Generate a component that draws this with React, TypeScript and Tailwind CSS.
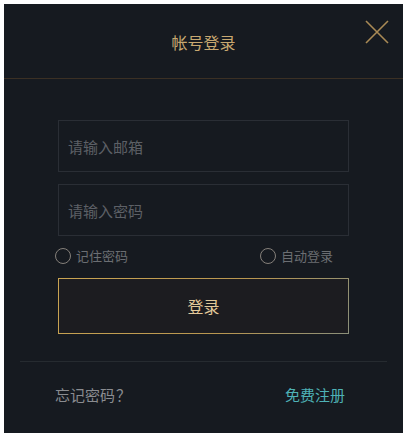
import { useState } from "react";

const cjk = { fontFamily: '"Noto Sans CJK SC", "Microsoft YaHei", sans-serif' };

function Radio({ label, checked, onClick }: { label: string; checked: boolean; onClick: () => void }) {
  return (
    <button type="button" onClick={onClick} className="flex items-center gap-[5px] text-[13px] text-[#6b6e72]">
      <span className="grid h-[16px] w-[16px] shrink-0 place-items-center rounded-full border-[1.5px] border-[#85807a]">
        {checked ? <span className="h-[7px] w-[7px] rounded-full bg-[#c8a664]" /> : null}
      </span>
      {label}
    </button>
  );
}

export default function App() {
  const [remember, setRemember] = useState(false);
  const [auto, setAuto] = useState(false);

  return (
    <div className="h-[437px] w-[407px] bg-white p-[4px]" style={cjk}>
      <div className="flex h-[429px] w-[399px] flex-col bg-[#161a20]">
        <div className="relative flex h-[75px] items-center justify-center border-b border-[#3b3024]">
          <h2 className="pt-[1px] text-[16px] text-[#c8a870]">帐号登录</h2>
          <button type="button" className="absolute right-[13px] top-[15px]" aria-label="关闭">
            <svg width="26" height="26" viewBox="0 0 26 26" fill="none" stroke="#a98a55" strokeWidth="1.6">
              <path d="M2 2 L24 24 M24 2 L2 24" />
            </svg>
          </button>
        </div>

        <div className="flex flex-col px-[51px] pt-[41px]">
          <input
            placeholder="请输入邮箱"
            className="mx-[3px] h-[52px] border border-[#2a2e35] bg-transparent px-[9px] text-[15px] text-[#b8b8b8] outline-none placeholder:text-[#5d6066]"
          />
          <input
            type="password"
            placeholder="请输入密码"
            className="mx-[3px] mt-[12px] h-[52px] border border-[#2a2e35] bg-transparent px-[9px] text-[15px] text-[#b8b8b8] outline-none placeholder:text-[#5d6066]"
          />
          <div className="mt-[10px] flex h-[20px] items-center justify-between pr-[19px]">
            <Radio label="记住密码" checked={remember} onClick={() => setRemember(!remember)} />
            <Radio label="自动登录" checked={auto} onClick={() => setAuto(!auto)} />
          </div>
          <div className="mx-[3px] mt-[12px] bg-[linear-gradient(120deg,#c9a452_0%,#b89650_60%,#8a8f7a_100%)] p-px">
            <button type="button" className="h-[54px] w-full bg-[#1c1c20] text-[16px] text-[#e2c99a]">
              登录
            </button>
          </div>
        </div>

        <div className="mx-[16px] mt-[27px] border-t border-[#262b30]" />

        <div className="flex items-center justify-between px-[51px] pr-[58px] pt-[22px] text-[15px]">
          <a className="text-[#8a8c90]">
            忘记密码<span className="inline-block w-[17px] text-center">？</span>
          </a>
          <a className="text-[#4eb2b6]">免费注册</a>
        </div>
      </div>
    </div>
  );
}
